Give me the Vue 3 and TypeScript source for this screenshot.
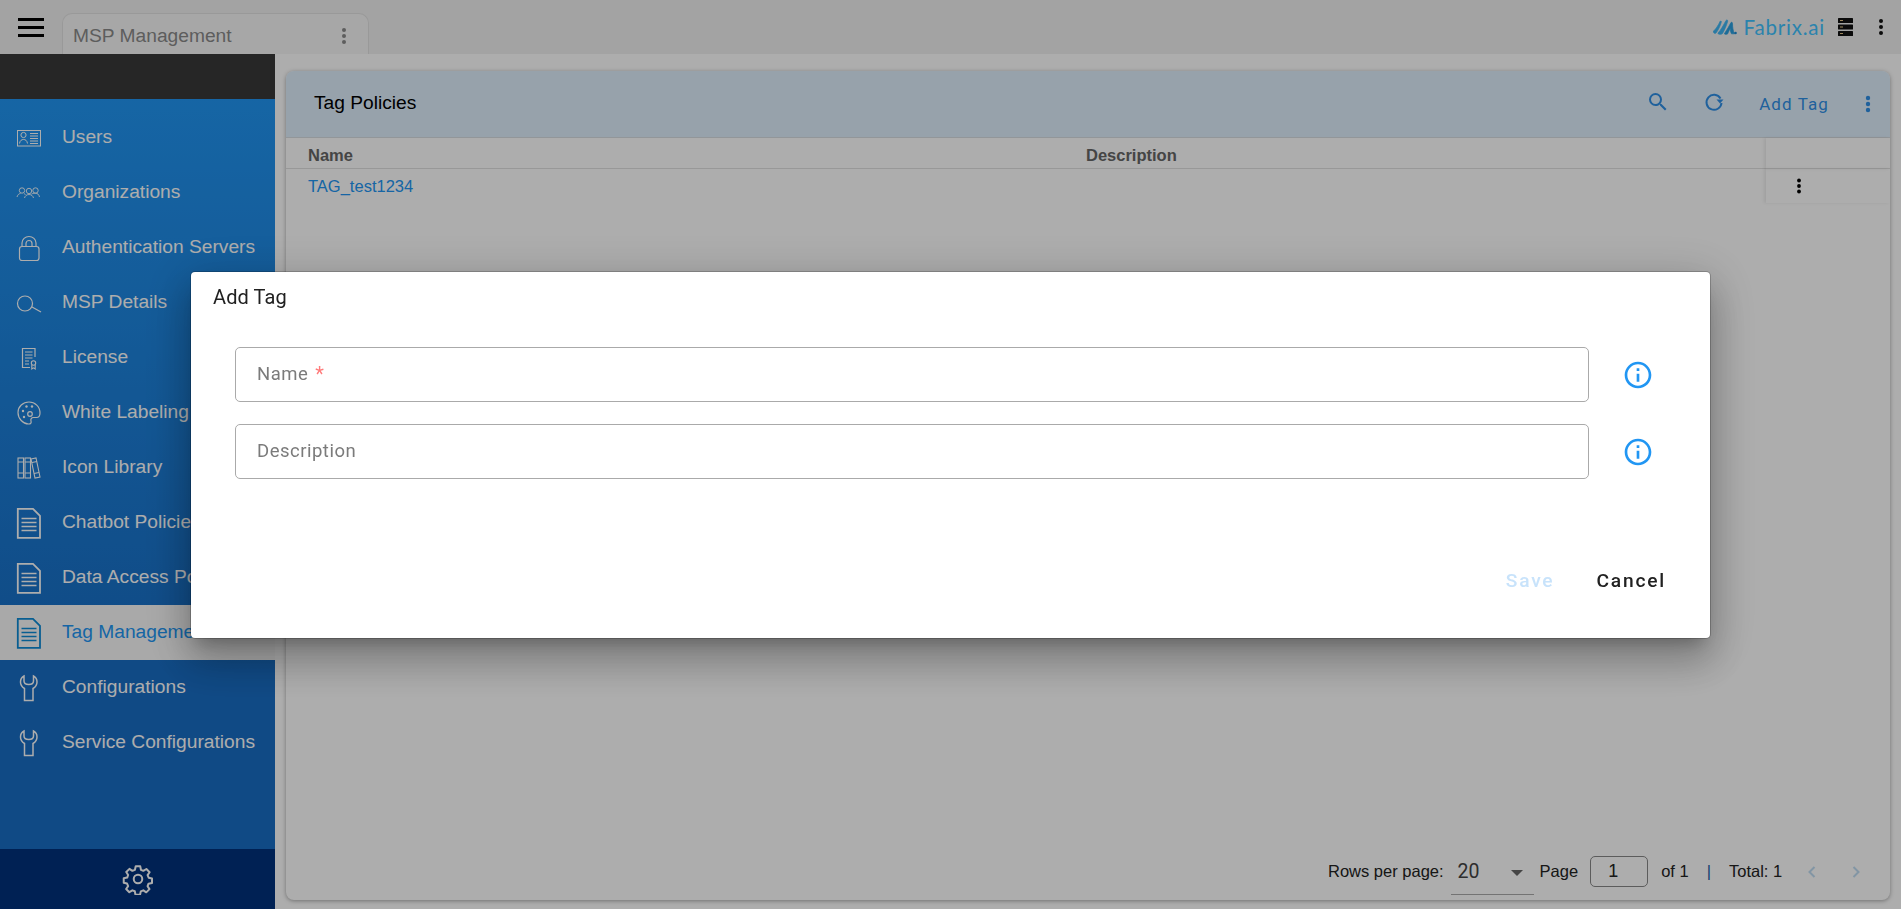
<script setup lang="ts">
interface NavItem { label: string; icon: string; active?: boolean }
const items: NavItem[] = [
  { label: 'Users', icon: 'user' },
  { label: 'Organizations', icon: 'org' },
  { label: 'Authentication Servers', icon: 'lock' },
  { label: 'MSP Details', icon: 'search' },
  { label: 'License', icon: 'license' },
  { label: 'White Labeling', icon: 'palette' },
  { label: 'Icon Library', icon: 'books' },
  { label: 'Chatbot Policies', icon: 'doc' },
  { label: 'Data Access Policies', icon: 'doc' },
  { label: 'Tag Management', icon: 'doc', active: true },
  { label: 'Configurations', icon: 'wrench' },
  { label: 'Service Configurations', icon: 'wrench' },
]
</script>

<template>
  <div class="app">
    <header class="topbar">
      <button class="burger" aria-label="menu"><i></i><i></i><i></i></button>
      <div class="tab">
        <span>MSP Management</span>
        <svg class="tab-dots" width="6" height="18" viewBox="0 0 6 18"><circle cx="3" cy="3" r="2"/><circle cx="3" cy="9" r="2"/><circle cx="3" cy="15" r="2"/></svg>
      </div>
      <div class="brand">
        <svg class="logo" width="24" height="16" viewBox="0 0 24 16" stroke-width="0.7" stroke-linejoin="round">
          <path d="M0.500 12C2 11 5 7 7 2.500C7.500 1.500 8.500 2 8.300 3C7.500 6.500 5 11.500 3 14C2 15 0 14 0.500 12Z" fill="#3db4f2" stroke="#3db4f2"/>
          <path d="M5 14C8 11 10.500 6 13 1.500C13.500 .5 15 1 14.700 2.200C13.500 6.500 11.500 11 9.500 14.500C8.500 15.800 4.500 15.500 5 14Z" fill="#3db4f2" stroke="#3db4f2"/>
          <path d="M11.500 14.500C14 11 16 7 18 3.500C18.800 3 19.500 3.500 19.500 4.500C19.500 8 20 12 21.500 14.800H18.500C17.500 13 17.300 11 17.300 9C16.300 11 15.500 13 14.500 15C13.500 15.500 11.200 15.500 11.500 14.500Z" fill="#2a9fe0" stroke="#2a9fe0"/>
          <circle cx="22.500" cy="14" r="1.300" fill="#1f8bd0"/>
        </svg>
        <span class="brand-text">Fabrix.ai</span>
        <svg class="server" width="15" height="18" viewBox="0 0 15 18">
          <rect y="0" width="15" height="5" rx="0.6"/><rect y="6.500" width="15" height="5" rx="0.6"/><rect y="13" width="15" height="5" rx="0.6"/>
          <rect x="2" y="2" width="3" height="1" fill="#e8c98a"/><rect x="2" y="8.500" width="3" height="1" fill="#e8c98a"/><rect x="2" y="15" width="3" height="1" fill="#e8c98a"/>
        </svg>
        <svg class="top-dots" width="6" height="18" viewBox="0 0 6 18"><circle cx="3" cy="3" r="2"/><circle cx="3" cy="9" r="2"/><circle cx="3" cy="15" r="2"/></svg>
      </div>
    </header>

    <div class="body">
      <aside class="sidebar">
        <div class="band"></div>
        <nav class="nav">
          <a v-for="it in items" :key="it.label" class="nav-item" :class="{ active: it.active }">
            <svg class="nav-icon" width="26" height="32" viewBox="0 0 26 32" fill="none" stroke="currentColor">
              <template v-if="it.icon === 'user'">
                <rect x="1.500" y="8.500" width="23" height="15.500" stroke-width="1"/>
                <circle cx="7.500" cy="13" r="2.600" stroke-width="1"/>
                <path d="M3.500 21.500c.5-3 2-4 4-4s3.500 1 4 4" stroke-width="1"/>
                <path d="M14 11.500h8M14 14h8M14 16.500h8M14 19h8M14 21.500h8" stroke-width="1"/>
              </template>
              <template v-else-if="it.icon === 'org'">
                <g stroke-width="0.9">
                  <circle cx="6" cy="13.500" r="2.700"/><circle cx="13" cy="14" r="2.700"/><circle cx="19.500" cy="13.500" r="2.700"/>
                  <path d="M1 20c.5-2 2-3.500 3.500-3.500M8 16.500c1 .5 1.300 1 1.500 1.500M8.500 21c.5-2 2-3.500 4.500-3.500s4 1.500 4.500 3.500M15.500 17c1-.5 2-.8 4-.8s3.500 1.300 4 3.800"/>
                </g>
              </template>
              <template v-else-if="it.icon === 'lock'">
                <rect x="3.500" y="14.500" width="19.500" height="14" rx="2.500" stroke-width="1.200"/>
                <path d="M6 14.500V11a7 6.500 0 0 1 14 0v3.500" stroke-width="1.200"/>
                <path d="M10 14.500v-3a3 3 0 0 1 6 0v3" stroke-width="1.200"/>
              </template>
              <template v-else-if="it.icon === 'search'">
                <circle cx="9" cy="16.500" r="7.500" stroke-width="1.200"/>
                <path d="M16 20l9 5" stroke-width="1.200"/>
              </template>
              <template v-else-if="it.icon === 'license'">
                <path d="M19 15V6.500H6.500v19H14" stroke-width="1.200"/>
                <path d="M9 10h7.500M9 13h7.500M9 16h7.500M9 19h4M9 22h4" stroke-width="1"/>
                <circle cx="17.500" cy="21" r="2.200" stroke-width="1.100"/>
                <path d="M15.800 23v4l1.700-1.200 1.700 1.200v-4" stroke-width="1.100"/>
              </template>
              <template v-else-if="it.icon === 'palette'">
                <path d="M13 5C7 5 2 9.500 2 15.500S7 27 12.500 27c2.500 0 3-1.500 2.500-3-.6-1.800.4-3.500 2.500-3.500h3c2.500 0 3.500-2 3.500-4.500C24 9.500 19 5 13 5Z" stroke-width="1.200"/>
                <circle cx="7" cy="14" r="1.200" fill="currentColor" stroke="none"/><circle cx="10.500" cy="9.500" r="1.200" fill="currentColor" stroke="none"/>
                <circle cx="16" cy="9.500" r="1.200" fill="currentColor" stroke="none"/><circle cx="8" cy="20" r="1.200" fill="currentColor" stroke="none"/>
                <circle cx="14" cy="17" r="2.300" stroke-width="1.200"/>
              </template>
              <template v-else-if="it.icon === 'books'">
                <g stroke-width="1.100">
                  <rect x="2" y="6" width="5.500" height="20"/><rect x="9" y="6" width="5.500" height="20"/>
                  <path d="M15 7l5-1 4 19-5 1Z"/>
                  <path d="M2 10h5.500M2 21h5.500M9 10h5.500M9 21h5.500M16 10.500l5-1M18 21.500l5-1"/>
                </g>
              </template>
              <template v-else-if="it.icon === 'doc'">
                <path d="M1.800 1.800h15.200l7 7v22H1.800Z" stroke-width="1.800"/>
                <path d="M5.500 11.500h15M5.500 15.500h15M5.500 19.500h15M5.500 23.500h15" stroke-width="1.600"/>
              </template>
              <template v-else-if="it.icon === 'wrench'">
                <path d="M8 4C5 5.500 4.500 8 4.500 10c0 3 1.500 5 4 6.500V28.500H17V16.500c2.500-1.500 4-3.500 4-6.500 0-2-.5-4.500-3.500-6v5c0 2-2 3.500-4.750 3.500S8 11 8 9Z" stroke-width="1.500"/>
              </template>
            </svg>
            <span class="nav-label">{{ it.label }}</span>
          </a>
        </nav>
        <div class="side-foot">
          <svg width="32" height="32" viewBox="0 0 24 24" fill="none" stroke="currentColor" stroke-width="1.500" stroke-linecap="round" stroke-linejoin="round">
            <circle cx="12" cy="12" r="3.200"/>
            <path d="M10.300 2.500h3.400l.5 2.600 1.800.8 2.300-1.400 2.400 2.400-1.500 2.200.8 1.900 2.500.6v3.400l-2.600.5-.7 1.900 1.400 2.200-2.400 2.400-2.200-1.500-1.900.8-.6 2.500h-3.400l-.5-2.600-1.800-.7-2.300 1.400-2.400-2.400 1.500-2.200-.8-1.900-2.500-.6v-3.400l2.600-.5.700-1.900-1.400-2.200 2.400-2.400 2.200 1.500 1.900-.8Z"/>
          </svg>
        </div>
      </aside>

      <main class="content">
        <section class="panel">
          <div class="panel-head">
            <h2>Tag Policies</h2>
            <div class="actions">
              <svg class="act-search" width="24" height="24" viewBox="0 0 24 24"><path fill="currentColor" d="M15.500 14h-.79l-.28-.27A6.470 6.470 0 0 0 16 9.500 6.500 6.500 0 1 0 9.500 16c1.610 0 3.090-.59 4.230-1.570l.27.28v.79l5 4.990L20.490 19l-4.990-5zm-6 0C7.010 14 5 11.990 5 9.500S7.010 5 9.500 5 14 7.010 14 9.500 11.990 14 9.500 14z"/></svg>
              <svg class="act-refresh" width="22" height="22" viewBox="0 0 22 22" fill="none" stroke="currentColor" stroke-width="2"><path d="M17.500 7.500A7.500 7.500 0 1 0 18.500 12"/><path d="M13.500 8.500h7l-3.500 4Z" fill="currentColor" stroke="none"/></svg>
              <span class="act-add">Add Tag</span>
              <svg class="act-dots" width="6" height="18" viewBox="0 0 6 18"><circle cx="3" cy="3" r="2.200"/><circle cx="3" cy="9" r="2.200"/><circle cx="3" cy="15" r="2.200"/></svg>
            </div>
          </div>
          <div class="thead">
            <div class="cell name">Name</div>
            <div class="cell desc">Description</div>
            <div class="cell pin"></div>
          </div>
          <div class="trow">
            <div class="cell name link">TAG_test1234</div>
            <div class="cell desc"></div>
            <div class="cell pin">
              <svg width="6" height="16" viewBox="0 0 6 16"><circle cx="3" cy="2.500" r="1.900"/><circle cx="3" cy="8" r="1.900"/><circle cx="3" cy="13.500" r="1.900"/></svg>
            </div>
          </div>
          <div class="spacer"></div>
          <div class="pager">
            <span>Rows per page:</span>
            <div class="rows-select"><span>20</span><i class="caret"></i></div>
            <span class="pg-page">Page</span>
            <div class="pg-input">1</div>
            <span class="pg-of">of 1</span>
            <span class="pg-sep">|</span>
            <span class="pg-total">Total: 1</span>
            <svg class="chev first" width="12" height="16" viewBox="0 0 12 16" fill="none" stroke="currentColor" stroke-width="2"><path d="M8.500 3L3.500 8l5 5"/></svg>
            <svg class="chev" width="12" height="16" viewBox="0 0 12 16" fill="none" stroke="currentColor" stroke-width="2"><path d="M3.500 3l5 5-5 5"/></svg>
          </div>
        </section>
      </main>
    </div>

    <div class="overlay">
      <div class="dialog" role="dialog">
        <div class="dlg-title">Add Tag</div>
        <div class="dlg-form">
          <div class="dlg-row">
            <div class="field"><span>Name</span><em>*</em></div>
            <svg class="info" width="32" height="32" viewBox="0 0 24 24"><path fill="#2196f3" d="M11 7h2v2h-2zm0 4h2v6h-2zm1-9C6.480 2 2 6.480 2 12s4.480 10 10 10 10-4.480 10-10S17.520 2 12 2zm0 18c-4.410 0-8-3.590-8-8s3.590-8 8-8 8 3.590 8 8-3.590 8-8 8z"/></svg>
          </div>
          <div class="dlg-row">
            <div class="field"><span>Description</span></div>
            <svg class="info" width="32" height="32" viewBox="0 0 24 24"><path fill="#2196f3" d="M11 7h2v2h-2zm0 4h2v6h-2zm1-9C6.480 2 2 6.480 2 12s4.480 10 10 10 10-4.480 10-10S17.520 2 12 2zm0 18c-4.410 0-8-3.590-8-8s3.590-8 8-8 8 3.590 8 8-3.590 8-8 8z"/></svg>
          </div>
        </div>
        <div class="dlg-actions">
          <span class="btn save">Save</span>
          <span class="btn cancel">Cancel</span>
        </div>
      </div>
    </div>
  </div>
</template>

<style>
html, body { margin: 0; padding: 0; overflow: hidden; }
</style>

<style scoped>
.app {
  width: 1901px;
  height: 909px;
  display: flex;
  flex-direction: column;
  background: #fff;
  font-family: "Liberation Sans", Arial, sans-serif;
  overflow: hidden;
}
.topbar {
  height: 54px;
  flex: none;
  display: flex;
  align-items: flex-start;
  background: #f0f0f0;
}
.burger {
  width: 26px;
  margin: 18px 18px 0;
  padding: 0;
  border: 0;
  background: none;
  display: flex;
  flex-direction: column;
  gap: 5.500px;
}
.burger i { display: block; height: 2.500px; background: #000; }
.tab {
  width: 307px;
  height: 41px;
  margin-top: 13px;
  box-sizing: border-box;
  padding: 3px 22px 0 10px;
  display: flex;
  align-items: center;
  justify-content: space-between;
  background: #f7f7f7;
  border: 1px solid #e2e2e2;
  border-bottom: 0;
  border-radius: 10px 10px 0 0;
  font-size: 19.200px;
  color: #8a8a8a;
}
.tab-dots { fill: #8a8a8a; margin-right: -1px; }
.brand {
  margin-left: auto;
  height: 54px;
  display: flex;
  align-items: center;
  padding-right: 17px;
}
.logo { margin-right: 6px; }
.brand-text {
  margin-top: -1px;
  font-family: Lato, sans-serif;
  font-size: 20.500px;
  letter-spacing: .8px;
  color: #3ec2ff;
}
.server { margin-left: 13px; fill: #111; }
.top-dots { margin-left: 25px; fill: #111; }

.body { flex: 1; display: flex; min-height: 0; }
.sidebar {
  width: 275px;
  flex: none;
  display: flex;
  flex-direction: column;
  background: linear-gradient(180deg, #2196f3 0%, #2196f3 5%, #186dc4 72%, #186dc4 100%);
  color: #fff;
}
.band { height: 45px; background: #383838; flex: none; }
.nav { flex: 1; display: flex; flex-direction: column; padding-top: 11px; }
.nav-item {
  height: 55px;
  flex: none;
  display: flex;
  align-items: center;
  padding-left: 16px;
  font-size: 19.200px;
  white-space: nowrap;
  overflow: hidden;
}
.nav-label { margin-top: -2px; }
.nav-item.active { background: #fafafa; color: #2196f3; }
.nav-item.active .nav-icon { color: #0d8bd6; }
.nav-icon { flex: none; margin-right: 20px; }
.side-foot {
  height: 60px;
  flex: none;
  background: #00327d;
  display: flex;
  align-items: center;
  justify-content: center;
}
.content {
  flex: 1;
  min-width: 0;
  padding: 17px 11px 9px;
  background: #fff;
  display: flex;
}
.panel {
  flex: 1;
  display: flex;
  flex-direction: column;
  min-width: 0;
  border-radius: 8px;
  background: #fff;
  box-shadow: 0 1px 4px rgba(0, 0, 0, .35);
}
.panel-head {
  height: 67px;
  flex: none;
  box-sizing: border-box;
  display: flex;
  align-items: center;
  padding-left: 28px;
  background: #dfeffd;
  border-bottom: 1px solid #d7dde2;
  border-radius: 8px 8px 0 0;
}
.panel-head h2 { margin: -3px 0 0; font-size: 19.200px; font-weight: 400; color: #000; }
.actions {
  margin-left: auto;
  display: flex;
  align-items: center;
  color: #2f8fe6;
}
.act-search { margin: -4px 33px 0 0; }
.act-refresh { margin: -4px 34px 0 0; }
.act-add {
  font-family: Roboto, sans-serif;
  font-size: 17px;
  letter-spacing: 1.100px;
  margin: -1px 36px 0 0;
}
.act-dots { margin-right: 19px; fill: currentColor; }
.thead, .trow { display: flex; flex: none; }
.thead { height: 31px; font-weight: 700; font-size: 16.500px; color: #666; border-bottom: 1px solid #e0e0e0; box-sizing: border-box; }
.thead .cell.name, .thead .cell.desc { padding-top: 4px; }
.trow { height: 34px; font-size: 16.500px; color: #555; box-sizing: border-box; }
.cell { display: flex; align-items: center; box-sizing: border-box; }
.cell.name { width: 800px; padding-left: 22px; }
.cell.desc { flex: 1; padding-left: 0; }
.cell.pin { width: 124px; justify-content: flex-start; padding-left: 30px; box-shadow: -2px 0 3px rgba(0, 0, 0, .08); }
.thead .cell.pin { height: 31px; }
.cell.link { color: #2196f3; padding-top: 1px; }
.spacer { flex: 1; }
.pager {
  height: 57px;
  flex: none;
  display: flex;
  align-items: center;
  padding-left: 1042px;
  font-size: 16.500px;
  color: #222;
}
.rows-select {
  width: 83px;
  height: 38px;
  margin: 8px 0 0 7px;
  box-sizing: border-box;
  border-bottom: 1px solid #aaa;
  display: flex;
  align-items: flex-start;
  padding: 3px 0 0 7px;
  font-family: Roboto, sans-serif;
  font-size: 19.500px;
  color: #444;
  position: relative;
}
.caret {
  position: absolute;
  right: 11px;
  top: 13.500px;
  width: 0;
  height: 0;
  border-left: 6px solid transparent;
  border-right: 6px solid transparent;
  border-top: 6px solid #666;
}
.pg-page { margin-left: 6px; }
.pg-input {
  width: 58px;
  height: 31px;
  margin-left: 12px;
  box-sizing: border-box;
  border: 1px solid #888;
  border-radius: 5px;
  display: flex;
  align-items: center;
  padding-left: 17px;
  font-size: 18px;
}
.pg-of { margin-left: 13px; }
.pg-sep { margin-left: 18px; color: #1a5fa8; }
.pg-total { margin-left: 18px; }
.chev { color: #c0dcf2; }
.chev.first { margin-left: 24px; margin-right: 32px; }

.overlay {
  position: fixed;
  inset: 0;
  background: rgba(0, 0, 0, .32);
  padding: 272px 0 0 191px;
}
.dialog {
  width: 1519px;
  height: 366px;
  box-sizing: border-box;
  display: flex;
  flex-direction: column;
  background: #fff;
  border-radius: 4px;
  box-shadow: 0 11px 15px -7px rgba(0,0,0,.22), 0 24px 38px 3px rgba(0,0,0,.18), 0 9px 46px 8px rgba(0,0,0,.16), 0 0 0 1px rgba(0,0,0,.2);
  font-family: Roboto, sans-serif;
}
.dlg-title {
  padding: 14px 0 0 22px;
  font-size: 20px;
  line-height: 23px;
  letter-spacing: .1px;
  color: #212121;
}
.dlg-form {
  margin-top: 38px;
  padding-left: 44px;
  display: flex;
  flex-direction: column;
  gap: 22px;
}
.dlg-row { display: flex; align-items: center; }
.field {
  width: 1354px;
  height: 55px;
  box-sizing: border-box;
  border: 1px solid #aaa;
  border-radius: 5px;
  padding: 0 0 2px 21px;
  display: flex;
  align-items: center;
  font-size: 18.500px;
  color: #7b7b7b;
  letter-spacing: .5px;
}
.field em { font-style: normal; color: #ff7b7b; margin-left: 7px; font-size: 20px; }
.info { margin-left: 33px; }
.dlg-actions {
  margin-top: auto;
  padding: 0 44px 46px 0;
  display: flex;
  justify-content: flex-end;
  gap: 42px;
  font-size: 19.200px;
  font-weight: 500;
  letter-spacing: 1.800px;
  line-height: 22px;
}
.save { color: #c8e3fb; }
.cancel { color: #212121; }
</style>
